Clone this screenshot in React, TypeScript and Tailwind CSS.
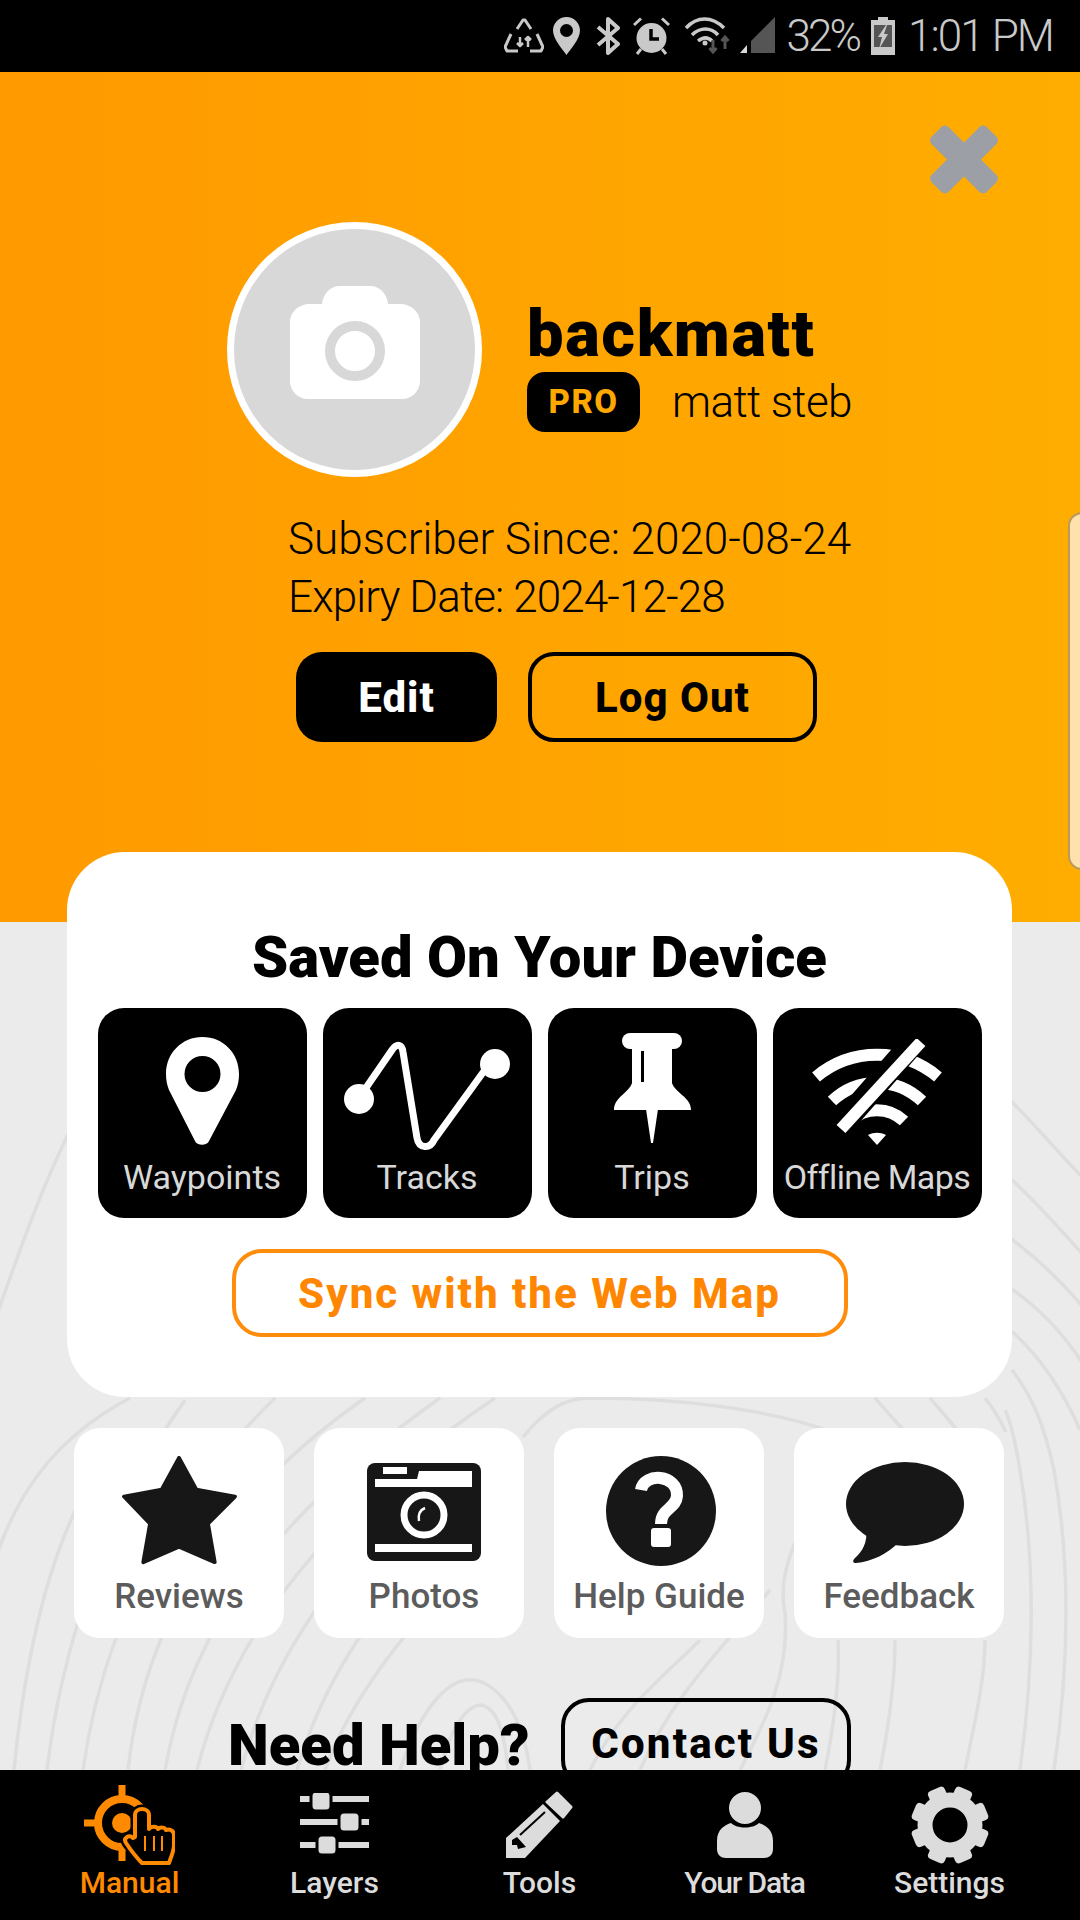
import type { ReactNode } from "react";

const font = { fontFamily: '"Roboto", "Liberation Sans", sans-serif' };

function StatusBar() {
  return (
    <div className="flex h-[72px] shrink-0 items-center justify-end bg-black pr-[27px] text-[#c9c9c9]">
      <svg width="40" height="40" viewBox="0 0 40 40" fill="none" stroke="#c9c9c9" strokeWidth="3" strokeLinejoin="round">
        <path d="M13 13 19 4h2l6 9" />
        <path d="M7 18 1 31l2 4h11" />
        <path d="M33 18l6 13-2 4H26" />
        <path d="M16 21v9m-3-3 3 3 3-3M24 31v-10m-3 3 3-3 3 3" strokeWidth="2.5" />
      </svg>
      <svg className="ml-[9px]" width="27" height="38" viewBox="0 0 27 38">
        <path fillRule="evenodd" fill="#c9c9c9" d="M13.5 0C6 0 0 6 0 13.5 0 22 10 33 13.5 38 17 33 27 22 27 13.5 27 6 21 0 13.5 0zm0 7a6.5 6.5 0 1 1 0 13 6.5 6.5 0 0 1 0-13z" />
      </svg>
      <svg className="ml-[16px]" width="25" height="38" viewBox="0 0 25 38" fill="none" stroke="#c9c9c9" strokeWidth="4" strokeLinejoin="round">
        <path d="M2 10 22 27 12 36V2l10 9L2 28" />
      </svg>
      <svg className="ml-[12px]" width="37" height="38" viewBox="0 0 37 38">
        <circle cx="18.5" cy="21" r="15" fill="#c9c9c9" />
        <path d="M18 12v10h8" fill="none" stroke="#000" strokeWidth="3.5" />
        <path d="M1 8 8 1.5M36 8l-7-6.5M4 37l4-5M33 37l-4-5" stroke="#c9c9c9" strokeWidth="3" />
      </svg>
      <svg className="ml-[14px]" width="50" height="38" viewBox="0 0 50 38" fill="none">
        <path d="M2 11C13 -1 28 -1 40 11M8 18c8-8 19-8 26 0M14 24c5-4 10-4 14 0" stroke="#c9c9c9" strokeWidth="3.5" />
        <circle cx="21" cy="26" r="2.5" fill="#c9c9c9" />
        <path d="M29 23v12m-3.5-4 3.5 4 3.5-4M41 32V20m-3.5 4 3.5-4 3.5 4" stroke="#555" strokeWidth="3" />
      </svg>
      <svg className="ml-[6px]" width="35" height="38" viewBox="0 0 35 38">
        <path d="M35 0V36H11V24z" fill="#555" />
        <path d="M7 28V36H0z" fill="#d9d9d9" />
      </svg>
      <span style={font} className="ml-[12px] text-[44px] font-light leading-none tracking-[-3px]">32%</span>
      <svg className="ml-[12px]" width="24" height="38" viewBox="0 0 24 38">
        <path d="M7 0h10v3h7v35H0V3h7z" fill="#c9c9c9" />
        <path d="M3 8h18v22H3z" fill="#555" />
        <path d="M15 8 7 20h4l-3 12 9-15h-4l3-9z" fill="#c9c9c9" />
      </svg>
      <span style={font} className="ml-[13px] text-[44px] font-light leading-none tracking-[-1.9px]">1:01 PM</span>
    </div>
  );
}

function Profile() {
  return (
    <section className="relative h-[850px] shrink-0 bg-gradient-to-r from-[#ff9a00] to-[#ffad00] pt-[150px]">
      <svg className="absolute left-[928px] top-[52px]" width="72" height="71" viewBox="0 0 72 71" fill="#9ca0a6">
        <rect x="-12" y="-39" width="24" height="78" rx="5" transform="translate(36 35.5) rotate(45)" />
        <rect x="-12" y="-39" width="24" height="78" rx="5" transform="translate(36 35.5) rotate(-45)" />
      </svg>
      <div className="absolute right-[-10px] top-[440px] h-[358px] w-[22px] rounded-l-[14px] border-2 border-[#b89a5c] bg-[#ffe1ae]" />

      <div className="ml-[227px] flex items-center">
        <div className="flex h-[255px] w-[255px] items-center justify-center rounded-full border-[7px] border-white bg-[#d8d8d8]">
          <svg className="mb-[14px]" width="130" height="113" viewBox="0 0 130 113">
            <path fill="#fff" d="M20 18h12c1-10 8-18 18-18h30c10 0 17 8 18 18h12c11 0 20 8 20 18v59c0 10-8 18-18 18H18C8 113 0 105 0 95V36c0-10 9-18 20-18z" />
            <circle cx="65" cy="65" r="25" fill="none" stroke="#d8d8d8" strokeWidth="10" />
          </svg>
        </div>
        <div className="ml-[45px] flex flex-col pt-[31px]">
          <div style={font} className="text-[65px] font-black leading-[70px] tracking-[1.6px] text-black">backmatt</div>
          <div className="mt-[3px] flex items-center">
            <span style={font} className="flex h-[60px] w-[113px] items-center justify-center rounded-[18px] bg-black text-[33px] font-extrabold tracking-[1.5px] text-[#ffa800]">PRO</span>
            <span style={font} className="ml-[32px] text-[44px] font-light leading-none tracking-[-0.6px] text-black">matt steb</span>
          </div>
        </div>
      </div>

      <div style={font} className="ml-[288px] mt-[33px] text-[44px] font-light leading-[58px] text-black">
        <div>Subscriber Since: 2020-08-24</div>
        <div className="tracking-[-0.9px]">Expiry Date: 2024-12-28</div>
      </div>

      <div style={font} className="ml-[296px] mt-[26px] flex gap-[31px] text-[42px] font-extrabold tracking-[1px]">
        <button className="flex h-[90px] w-[201px] items-center justify-center rounded-[26px] bg-black text-white">Edit</button>
        <button className="flex h-[90px] w-[289px] items-center justify-center rounded-[26px] border-4 border-black text-black">Log Out</button>
      </div>
    </section>
  );
}

function DeviceTile({ label, children, tight }: { label: string; children: ReactNode; tight?: boolean }) {
  return (
    <div className="flex h-[210px] w-[209px] flex-col items-center rounded-[26px] bg-black">
      <div className="flex h-[137px] items-end justify-center">{children}</div>
      <span style={font} className={`mt-[12px] text-[34px] leading-[40px] text-[#d8d8d8] ${tight ? "tracking-[-0.6px]" : ""}`}>{label}</span>
    </div>
  );
}

function LinkTile({ label, shift, children }: { label: string; shift?: boolean; children: ReactNode }) {
  return (
    <div className={`flex h-[210px] w-[210px] flex-col items-center rounded-[26px] bg-white ${shift ? "pl-[10px]" : ""}`}>
      <div className="flex h-[138px] items-end justify-center">{children}</div>
      <span style={font} className="mt-[11px] text-[35px] font-medium leading-[40px] text-[#5c5c5c]">{label}</span>
    </div>
  );
}

const contours = [
  "M-5 1320C20 1250 40 1190 75 1120",
  "M-5 1560C15 1500 50 1440 130 1398",
  "M14 1770C25 1660 50 1520 120 1440",
  "M47 1770C60 1660 100 1520 185 1400",
  "M83 1770C100 1650 150 1520 275 1398",
  "M128 1770C140 1660 190 1520 365 1398",
  "M165 1770C185 1660 240 1540 440 1398",
  "M197 1770C225 1660 300 1530 495 1398",
  "M241 1770C270 1660 340 1560 420 1500",
  "M297 1770C320 1690 370 1610 425 1560",
  "M325 1770C350 1700 410 1620 470 1570",
  "M400 1770C420 1710 450 1670 482 1682C510 1695 525 1730 530 1770",
  "M440 1770C450 1730 465 1705 482 1705C500 1710 505 1740 508 1770",
  "M590 1770C620 1710 660 1680 700 1640",
  "M640 1770C670 1700 720 1650 770 1590",
  "M523 1437C545 1410 565 1398 590 1398C680 1398 770 1410 826 1430C850 1480 770 1540 785 1613C790 1680 760 1730 740 1770",
  "M825 1770C835 1720 840 1680 838 1640",
  "M880 1770C890 1720 895 1680 895 1640",
  "M875 1398C885 1410 895 1420 905 1432",
  "M930 1398C940 1410 950 1420 958 1432",
  "M985 1398C995 1410 1000 1420 1006 1432",
  "M965 1770C975 1720 985 1680 985 1640",
  "M1020 1770C1035 1660 1035 1560 1020 1470C1015 1440 1010 1420 1005 1410",
  "M1054 1770C1070 1660 1070 1560 1054 1470C1045 1430 1035 1400 1012 1370",
  "M1010 1100C1040 1130 1060 1155 1090 1185",
  "M1010 1178C1040 1205 1060 1230 1090 1262",
  "M1010 1238C1040 1260 1065 1285 1090 1315",
  "M1010 1288C1050 1315 1075 1350 1090 1375",
  "M1010 1330C1040 1355 1065 1395 1080 1430",
];

function TopoLines() {
  return (
    <svg className="absolute inset-0" width="1080" height="848" viewBox="0 922 1080 848" fill="none" stroke="#dedede" strokeWidth="3.5">
      {contours.map((d) => (
        <path key={d} d={d} />
      ))}
    </svg>
  );
}

function DevicePanel() {
  return (
    <div className="relative z-10 -mt-[70px] ml-[67px] flex h-[545px] w-[945px] flex-col items-center rounded-[58px] bg-white pt-[73px]">
      <h2 style={font} className="text-[58px] font-black leading-[64px] text-black">Saved On Your Device</h2>
      <div className="mt-[19px] flex gap-[16px]">
        <DeviceTile label="Waypoints">
          <svg width="73" height="108" viewBox="0 0 73 108">
            <path fillRule="evenodd" fill="#fff" d="M36.5 0C16 0 0 16 0 37c0 6 1 11 3 16l26 51c2 5 12 5 14 0l27-51c2-5 3-10 3-16C73 16 57 0 36.5 0zm0 19a18 18 0 1 1 0 36 18 18 0 0 1 0-36z" />
          </svg>
        </DeviceTile>
        <DeviceTile label="Tracks">
          <svg className="-mb-[7px]" width="166" height="116" viewBox="0 0 166 116" fill="none">
            <path d="M15 62 48 14c5-7 10-6 11 2l14 86c2 11 13 11 17 2l61-84" stroke="#fff" strokeWidth="7" strokeLinejoin="round" />
            <circle cx="15" cy="63" r="15" fill="#fff" />
            <circle cx="151" cy="28" r="15" fill="#fff" />
          </svg>
        </DeviceTile>
        <DeviceTile label="Trips">
          <svg className="mb-[2px]" width="77" height="110" viewBox="0 0 77 110">
            <rect x="8" y="0" width="60" height="16" rx="8" fill="#fff" />
            <path fill="#fff" d="M18 14h40v36c3 10 19 14 19 27H0c0-13 15-17 18-27z" />
            <rect x="27" y="18" width="3" height="31" fill="#000" />
            <path fill="#fff" d="M32 76h12l-5 34h-2z" />
          </svg>
        </DeviceTile>
        <DeviceTile label="Offline Maps" tight>
          <svg width="138" height="106" viewBox="0 0 138 106" fill="none">
            <path d="M8 38a95 95 0 0 1 122 0M24 62a65 65 0 0 1 90 0M42 82a39 39 0 0 1 54 0" stroke="#fff" strokeWidth="12" />
            <path d="M112 -4 28 92" stroke="#000" strokeWidth="24" />
            <path d="M113 3 33 90" stroke="#fff" strokeWidth="12" />
            <path d="M60 96c6-3 12-3 18 0l-9 10z" fill="#fff" />
          </svg>
        </DeviceTile>
      </div>
      <button style={font} className="mt-[31px] flex h-[88px] w-[616px] items-center justify-center rounded-[30px] border-4 border-[#ff8c0a] text-[42px] font-extrabold tracking-[2px] text-[#ff8600]">
        Sync with the Web Map
      </button>
    </div>
  );
}

function LinkRow() {
  return (
    <div className="relative z-10 ml-[74px] mt-[31px] flex gap-[30px]">
      <LinkTile label="Reviews">
        <svg width="115" height="110" viewBox="-2 -2 119 114">
          <path fill="#171717" stroke="#171717" strokeWidth="4" strokeLinejoin="round" d="M57 0 75 33 115 40 87 68 94 108 57 92 20 108 27 68 0 40 39 33z" />
        </svg>
      </LinkTile>
      <LinkTile label="Photos" shift>
        <svg className="mb-[5px]" width="114" height="98" viewBox="0 0 114 98">
          <rect width="114" height="98" rx="8" fill="#171717" />
          <path d="M16 4h24v7H16zM8 8v16h97V8H52l-2 8H8z" fill="#fff" />
          <circle cx="57" cy="52" r="20" fill="#171717" stroke="#fff" strokeWidth="7" />
          <path d="M52 58c-1-6 1-11 6-13" fill="none" stroke="#fff" strokeWidth="2.5" />
          <rect x="8" y="81" width="97" height="8" fill="#fff" />
        </svg>
      </LinkTile>
      <LinkTile label="Help Guide">
        <svg className="ml-[3px]" width="110" height="110" viewBox="0 0 110 110">
          <circle cx="55" cy="55" r="55" fill="#171717" />
          <path d="M35 34c3-18 37-16 36 6-1 13-16 12-16 28" fill="none" stroke="#fff" strokeWidth="12" />
          <rect x="45" y="72" width="20" height="19" rx="3" fill="#fff" />
        </svg>
      </LinkTile>
      <LinkTile label="Feedback">
        <svg className="mb-[3px] ml-[12px]" width="118" height="101" viewBox="0 0 118 101">
          <ellipse cx="59" cy="42" rx="59" ry="42" fill="#171717" />
          <path fill="#171717" d="M20 68C22 80 16 90 9 96c-3 3-2 5 1 5 16-1 32-10 42-20z" />
        </svg>
      </LinkTile>
    </div>
  );
}

function HelpRow() {
  return (
    <div className="relative z-10 ml-[228px] mt-[60px] flex items-start gap-[32px]">
      <span style={font} className="mt-[15px] w-[301px] whitespace-nowrap text-[58px] font-black leading-[64px] text-black">Need Help?</span>
      <button style={font} className="flex h-[90px] w-[290px] shrink-0 items-center justify-center rounded-[28px] border-4 border-black text-[42px] font-extrabold tracking-[2.2px] text-black">
        Contact Us
      </button>
    </div>
  );
}

function NavItem({ label, active, tight, children }: { label: string; active?: boolean; tight?: boolean; children: ReactNode }) {
  return (
    <div className="flex w-[205px] flex-col items-center">
      <div className="flex h-[80px] items-center justify-center">{children}</div>
      <span style={font} className={`mt-[1px] text-[30px] font-medium leading-[34px] ${tight ? "tracking-[-1.2px]" : ""} ${active ? "text-[#ff8a00]" : "text-[#dcdcdc]"}`}>{label}</span>
    </div>
  );
}

function BottomNav() {
  const gearTeeth = [22.5, 67.5, 112.5, 157.5, 202.5, 247.5, 292.5, 337.5];
  const hand = "M51 52V30c0-8 14-8 14 0v14c2-3 8-3 9 0 2-2 7-2 8 1 3-1 8 0 8 5v10c0 6-3 12-5 18H58C52 72 46 64 42 58c-3-5 3-9 7-5z";
  return (
    <nav className="relative z-20 flex h-[150px] shrink-0 bg-black pl-[27px] pt-[15px]">
      <NavItem label="Manual" active>
        <svg width="91" height="80" viewBox="0 0 91 80" fill="none">
          <circle cx="38" cy="38" r="24" stroke="#ff8a00" strokeWidth="8" />
          <circle cx="38" cy="38" r="10" fill="#ff8a00" />
          <path d="M38 0v12M38 64v12M0 38h11" stroke="#ff8a00" strokeWidth="7" />
          <path d={hand} stroke="#000" strokeWidth="9" strokeLinejoin="round" fill="#000" />
          <path d={hand} stroke="#ff8a00" strokeWidth="4" strokeLinejoin="round" fill="#000" />
          <path d="M61 51v15M70 51v15M78 51v15" stroke="#ff8a00" strokeWidth="2" />
        </svg>
      </NavItem>
      <NavItem label="Layers">
        <svg width="69" height="64" viewBox="0 0 69 64" fill="#dcdcdc">
          <rect y="3" width="69" height="6" />
          <rect y="26" width="69" height="6" />
          <rect y="49" width="69" height="6" />
          <rect x="11" y="-2" width="20" height="20" rx="5" stroke="#000" strokeWidth="3" />
          <rect x="39" y="19" width="21" height="20" rx="5" stroke="#000" strokeWidth="3" />
          <rect x="17" y="42" width="20" height="20" rx="5" stroke="#000" strokeWidth="3" />
        </svg>
      </NavItem>
      <NavItem label="Tools">
        <svg width="67" height="68" viewBox="0 0 67 68" fill="#dcdcdc">
          <path strokeLinejoin="round" stroke="#dcdcdc" strokeWidth="3" d="M51 2 65 16 57 26 41 11z" />
          <path d="M37 13 54 30 19 67H0V47z" />
          <path d="M14 44 39 21" stroke="#000" strokeWidth="2" />
          <path d="M6 49l5-3 9 10-8 2-1-4-5 0z" fill="#000" />
        </svg>
      </NavItem>
      <NavItem label="Your Data" tight>
        <svg width="56" height="68" viewBox="0 0 56 68" fill="#dcdcdc">
          <path d="M0 58V50C0 38 8 34 14 32 20 38 36 38 42 32 48 34 56 38 56 50V58C56 64 52 67 47 67H9C4 67 0 64 0 58z" />
          <circle cx="28" cy="17" r="17" stroke="#000" strokeWidth="2" />
        </svg>
      </NavItem>
      <NavItem label="Settings">
        <svg width="78" height="78" viewBox="0 0 78 78">
          {gearTeeth.map((a) => (
            <rect key={a} x="30" y="0" width="18" height="20" rx="4" fill="#dcdcdc" transform={`rotate(${a} 39 39)`} />
          ))}
          <circle cx="39" cy="39" r="25" fill="none" stroke="#dcdcdc" strokeWidth="15" />
        </svg>
      </NavItem>
    </nav>
  );
}

export default function App() {
  return (
    <div className="flex h-[1920px] w-[1080px] flex-col overflow-hidden bg-[#ebebeb]">
      <StatusBar />
      <Profile />
      <main className="relative min-h-0 flex-1">
        <TopoLines />
        <DevicePanel />
        <LinkRow />
        <HelpRow />
      </main>
      <BottomNav />
    </div>
  );
}
